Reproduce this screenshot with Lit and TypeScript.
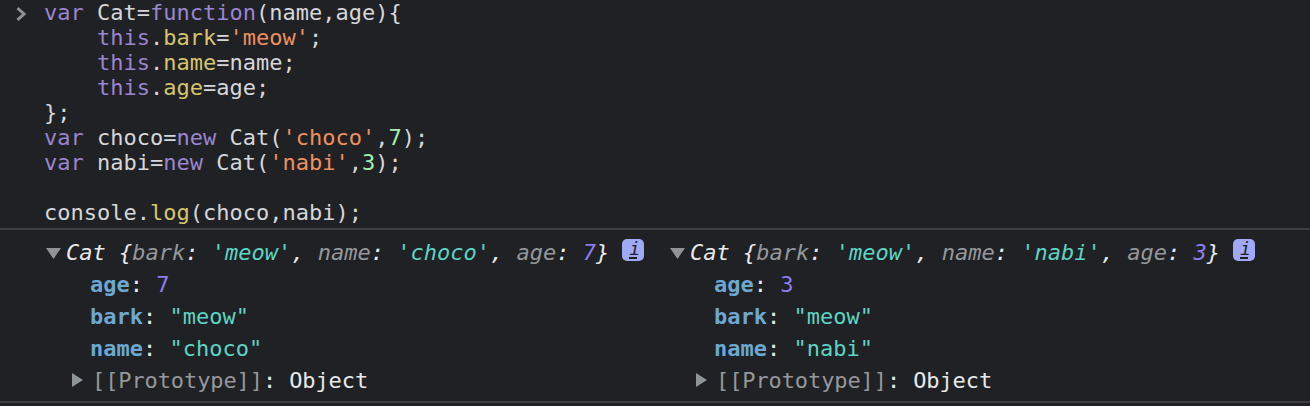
import { LitElement, html, css } from "lit";
import { customElement } from "lit/decorators.js";

const obj = (name: string, age: string) => html`
  <div class="obj">
    <div class="summary">
      <svg class="tri down" viewBox="0 0 15 11"><path d="M0 0H15L7.5 11Z"/></svg>
      <span class="it"><span class="w">Cat </span><span class="w">{</span><span class="k">bark</span><span class="w">: </span><span class="s">'meow'</span><span class="w">, </span><span class="k">name</span><span class="w">: </span><span class="s">'${name}'</span><span class="w">, </span><span class="k">age</span><span class="w">: </span><span class="n">${age}</span><span class="w">}</span></span>
      <span class="info"><span class="glyph">i</span></span>
    </div>
    <div class="prop"><b>age</b><span class="w">: </span><span class="n">${age}</span></div>
    <div class="prop"><b>bark</b><span class="w">: </span><span class="s">"meow"</span></div>
    <div class="prop"><b>name</b><span class="w">: </span><span class="s">"${name}"</span></div>
    <div class="proto">
      <svg class="tri right" viewBox="0 0 11 14"><path d="M0 0V14L11 7Z"/></svg>
      <span class="k">[[Prototype]]</span><span class="w">: Object</span>
    </div>
  </div>`;

@customElement("app-root")
export class AppRoot extends LitElement {
  static styles = css`
    :host {
      display: block;
      width: 1310px;
      height: 406px;
      overflow: hidden;
      background: #202124;
      color: #d5d7da;
      font-family: "DejaVu Sans Mono", monospace;
      font-size: 22px;
    }
    .input {
      display: flex;
      height: 230px;
      box-sizing: border-box;
      border-bottom: 2px solid #3d3e41;
      padding-left: 16px;
    }
    .prompt { width: 28px; flex: none; padding-top: 7px; }
    .prompt svg { display: block; width: 10px; height: 14px; }
    pre {
      margin: 0;
      font: inherit;
      line-height: 25px;
    }
    .p { color: #9a85d0; }
    .y { color: #d6c56c; }
    .o { color: #ee9060; }
    .g { color: #a5f0b0; }
    .output {
      display: flex;
      height: 173px;
      box-sizing: border-box;
      border-bottom: 2px solid #3d3e41;
      padding: 6px 0 0 46px;
    }
    .obj { width: 624px; flex: none; }
    .obj + .obj { width: auto; }
    .summary { display: flex; align-items: center; height: 32px; }
    .tri { fill: #8f9497; display: block; flex: none; }
    .down { width: 15px; height: 11px; margin-right: 5px; margin-top: 3px; }
    .it { font-style: italic; white-space: pre; }
    .w { color: #e8eaed; white-space: pre; }
    .k { color: #95989c; }
    .s { color: #5cd5c4; }
    .n { color: #8f7cf0; }
    .info {
      flex: none;
      display: flex;
      justify-content: center;
      width: 22px;
      height: 22px;
      margin: -4px 0 0 13px;
      border-radius: 5px;
      background: #a0a8f8;
    }
    .glyph {
      color: #202124;
      font-size: 18px;
      font-style: italic;
      line-height: 20px;
      height: 18px;
      width: 8px;
      text-align: center;
      border-bottom: 2px solid #202124;
    }
    .prop { height: 32px; line-height: 32px; padding-left: 44px; padding-top: 1px; margin-bottom: -1px; white-space: pre; }
    .prop b { color: #6ba8d2; font-weight: 700; }
    .proto { display: flex; align-items: center; height: 32px; padding-left: 26px; white-space: pre; letter-spacing: -0.1px; }
    .right { width: 11px; height: 14px; margin-right: 9px; }
  `;

  render() {
    return html`
      <div class="input">
        <div class="prompt"><svg viewBox="0 0 10 14"><path d="M1.5 1.2 8 7 1.5 12.8" fill="none" stroke="#8f9194" stroke-width="3"/></svg></div>
        <pre><span class="p">var</span> Cat=<span class="p">function</span>(name,age){
    <span class="p">this</span>.<span class="y">bark</span>=<span class="o">'meow'</span>;
    <span class="p">this</span>.<span class="y">name</span>=name;
    <span class="p">this</span>.<span class="y">age</span>=age;
};
<span class="p">var</span> choco=<span class="p">new</span> Cat(<span class="o">'choco'</span>,<span class="g">7</span>);
<span class="p">var</span> nabi=<span class="p">new</span> Cat(<span class="o">'nabi'</span>,<span class="g">3</span>);

console.<span class="y">log</span>(choco,nabi);</pre>
      </div>
      <div class="output">
        ${obj("choco", "7")}
        ${obj("nabi", "3")}
      </div>
    `;
  }
}
